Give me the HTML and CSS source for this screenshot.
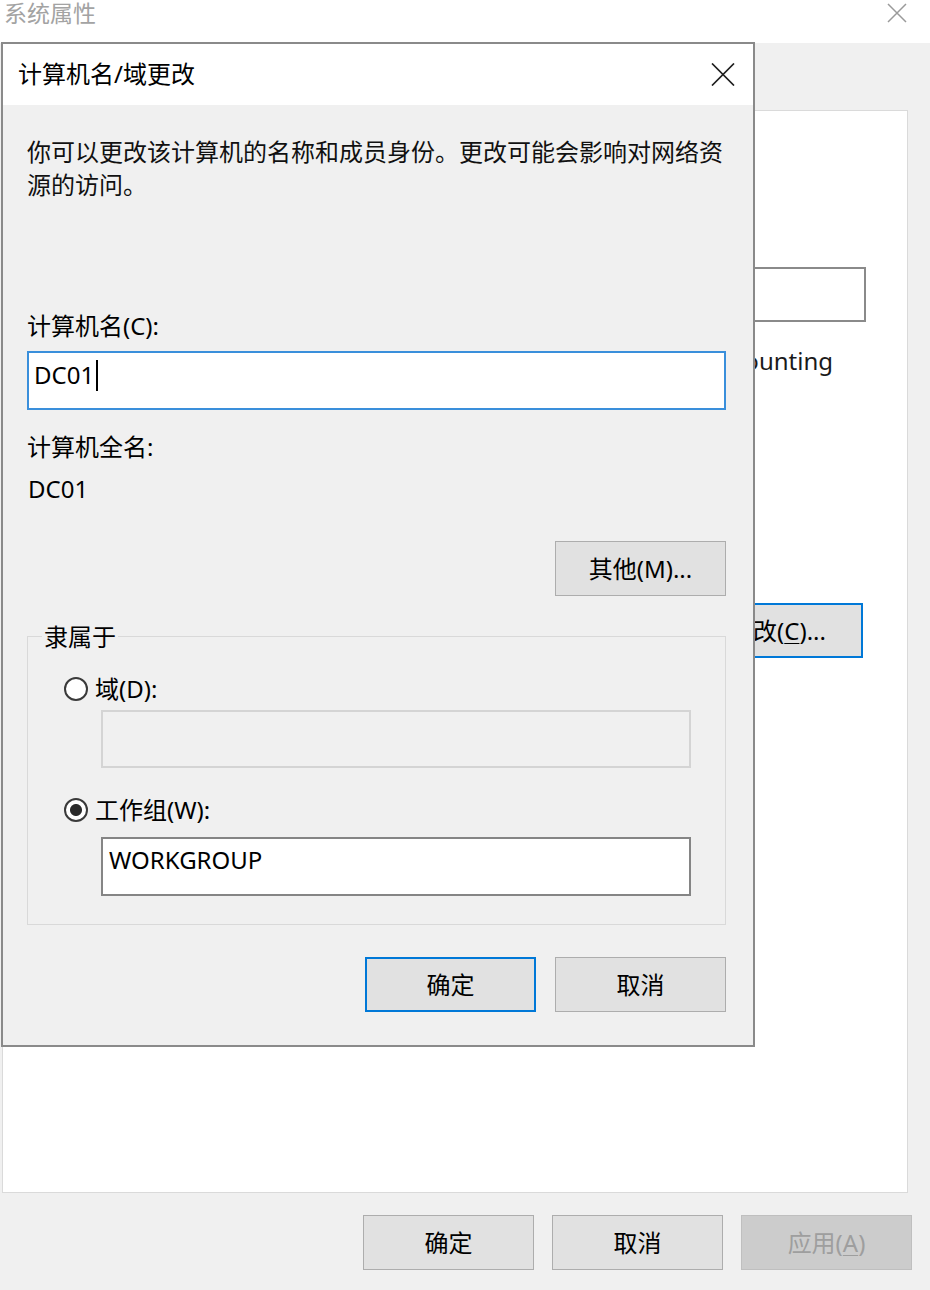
FILE: index.html
```html
<!DOCTYPE html>
<html lang="zh-CN">
<head>
<meta charset="utf-8">
<title>计算机名/域更改</title>
<link rel="stylesheet" href="styles.css">
</head>
<body>
<div class="sys">
  <div class="sys-titlebar">
    <span class="sys-title">系统属性</span>
    <svg class="sys-close" width="20" height="20" viewBox="0 0 20 20"><path d="M1 1L19 19M19 1L1 19" stroke="#9a9a9a" stroke-width="1.5" fill="none"/></svg>
  </div>
  <div class="sys-body">
    <div class="sys-panel">
      <div class="bg-textbox"></div>
      <div class="bg-hint">例如: “Kitchen Computer”或“Accounting</div>
      <div class="btn btn-default bg-change">更改(<u>C</u>)...</div>
    </div>
    <div class="sys-actions">
      <div class="btn">确定</div>
      <div class="btn">取消</div>
      <div class="btn btn-disabled">应用(<u>A</u>)</div>
    </div>
  </div>
</div>

<div class="dialog">
  <div class="dlg-titlebar">
    <span class="dlg-title">计算机名/域更改</span>
    <svg class="dlg-close" width="24" height="23" viewBox="0 0 24 23"><path d="M1 0.5L23 22.5M23 0.5L1 22.5" stroke="#1e1e1e" stroke-width="1.7" fill="none"/></svg>
  </div>
  <div class="dlg-body">
    <p class="desc">你可以更改该计算机的名称和成员身份。更改可能会影响对网络资源的访问。</p>
    <div class="label name-label">计算机名(C):</div>
    <div class="textbox focused">DC01<span class="caret"></span></div>
    <div class="label full-label">计算机全名:</div>
    <div class="full-value">DC01</div>
    <div class="other-row">
      <div class="btn">其他(M)...</div>
    </div>
    <fieldset class="member">
      <legend>隶属于</legend>
      <div class="radio-row first">
        <span class="radio"></span>
        <span>域(D):</span>
      </div>
      <div class="textbox disabled"></div>
      <div class="radio-row second">
        <span class="radio checked"></span>
        <span>工作组(W):</span>
      </div>
      <div class="textbox workgroup">WORKGROUP</div>
    </fieldset>
    <div class="dlg-actions">
      <div class="btn btn-default">确定</div>
      <div class="btn">取消</div>
    </div>
  </div>
</div>
</body>
</html>
```

FILE: styles.css
```css
* {
  box-sizing: border-box;
}

body {
  margin: 0;
  width: 930px;
  height: 1290px;
  overflow: hidden;
  position: relative;
  background: #f0f0f0;
  font-family: "Noto Sans", "Noto Sans CJK SC", sans-serif;
  font-size: 24px;
  line-height: 33px;
  color: #000;
}

/* ---------- background window ---------- */
.sys {
  height: 1290px;
  display: flex;
  flex-direction: column;
}

.sys-titlebar {
  height: 43px;
  flex: none;
  background: #fff;
  display: flex;
  justify-content: space-between;
  align-items: flex-start;
  padding: 0 23px 0 4px;
}

.sys-title {
  color: #a3a3a3;
  font-size: 23px;
  line-height: 27px;
}

.sys-close {
  margin-top: 3px;
}

.sys-body {
  flex: 1;
  display: flex;
  flex-direction: column;
  padding: 67px 22px 0 2px;
}

.sys-panel {
  height: 1083px;
  flex: none;
  background: #fff;
  border: 1px solid #dadada;
  display: flex;
  flex-direction: column;
  align-items: flex-end;
}

.bg-textbox {
  margin-top: 156px;
  margin-right: 41px;
  width: 560px;
  height: 55px;
  border: 2px solid #8a8a8a;
  background: #fff;
}

.bg-hint {
  margin-top: 22px;
  margin-right: 74px;
  white-space: nowrap;
  color: #1a1a1a;
}

.bg-change {
  margin-top: 226px;
  margin-right: 44px;
}

.sys-actions {
  margin-top: 22px;
  margin-right: -4px;
  display: flex;
  justify-content: flex-end;
  gap: 18px;
}

/* ---------- buttons ---------- */
.btn {
  width: 171px;
  height: 55px;
  flex: none;
  display: flex;
  align-items: center;
  justify-content: center;
  background: #e1e1e1;
  border: 1px solid #adadad;
  color: #000;
  white-space: nowrap;
}

.btn-default {
  border: 2px solid #0078d7;
}

.btn-disabled {
  background: #cccccc;
  border-color: #bfbfbf;
  color: #9e9e9e;
}

.btn u {
  text-decoration-thickness: 1px;
  text-underline-offset: 3px;
}

/* ---------- dialog ---------- */
.dialog {
  position: absolute;
  left: 1px;
  top: 42px;
  width: 754px;
  height: 1005px;
  border: 2px solid #8a8a8a;
  background: #f0f0f0;
  display: flex;
  flex-direction: column;
}

.dlg-titlebar {
  height: 61px;
  flex: none;
  background: #fff;
  display: flex;
  align-items: center;
  justify-content: space-between;
  padding: 0 18px 3px 15px;
}

.dlg-close {
  margin-top: 3px;
}

.dlg-body {
  flex: 1;
  padding: 30px 27px 0 24px;
}

.desc {
  margin: 0;
  width: 700px;
  color: #111;
}

.name-label {
  margin-top: 108px;
}

.textbox {
  background: #fff;
  border: 2px solid #858585;
  white-space: nowrap;
}

.textbox.focused {
  margin-top: 9px;
  height: 59px;
  border-color: #3a8fdb;
  padding: 5px 0 0 5px;
  display: flex;
  align-items: flex-start;
}

.caret {
  display: inline-block;
  width: 2px;
  height: 31px;
  margin-top: 2px;
  margin-left: 2px;
  background: #000;
}

.full-label {
  margin-top: 20px;
}

.full-value {
  margin-top: 9px;
  padding-left: 1px;
}

.other-row {
  margin-top: 36px;
  display: flex;
  justify-content: flex-end;
}

.member {
  margin: 24px 0 0 0;
  padding: 19px 34px 28px 14px;
  border: 1px solid #d9d9d9;
  min-width: 0;
}

.member legend {
  padding: 0 2px;
  line-height: 33px;
}

.radio-row {
  height: 33px;
  margin-left: 22px;
  display: flex;
  align-items: center;
  gap: 7px;
}

.radio-row.second {
  margin-top: 25px;
}

.radio {
  width: 24px;
  height: 24px;
  border-radius: 50%;
  border: 2px solid #3a3a3a;
  background: #fff;
}

.radio.checked {
  background: radial-gradient(circle, #2a2a2a 0 5.5px, #fff 6.5px);
}

.textbox.disabled {
  margin: 5px 0 0 59px;
  height: 58px;
  background: #f0f0f0;
  border: 2px solid #d4d4d4;
}

.textbox.workgroup {
  margin: 11px 0 0 59px;
  height: 59px;
  padding: 4px 6px;
}

.dlg-actions {
  margin-top: 32px;
  display: flex;
  justify-content: flex-end;
  gap: 19px;
}
```
